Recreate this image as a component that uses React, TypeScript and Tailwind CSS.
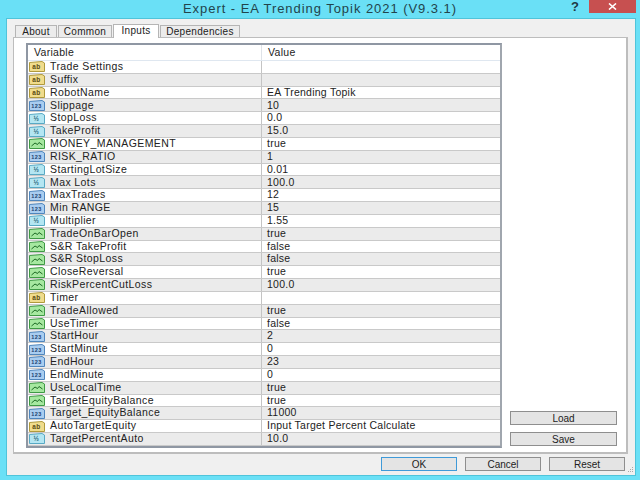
type Kind = "ab" | "123" | "v2" | "bool";

const rows: [Kind, string, string][] = [
  ["ab", "Trade Settings", ""],
  ["ab", "Suffix", ""],
  ["ab", "RobotName", "EA Trending Topik"],
  ["123", "Slippage", "10"],
  ["v2", "StopLoss", "0.0"],
  ["v2", "TakeProfit", "15.0"],
  ["bool", "MONEY_MANAGEMENT", "true"],
  ["123", "RISK_RATIO", "1"],
  ["v2", "StartingLotSize", "0.01"],
  ["v2", "Max Lots", "100.0"],
  ["123", "MaxTrades", "12"],
  ["123", "Min RANGE", "15"],
  ["v2", "Multiplier", "1.55"],
  ["bool", "TradeOnBarOpen", "true"],
  ["bool", "S&R TakeProfit", "false"],
  ["bool", "S&R StopLoss", "false"],
  ["bool", "CloseReversal", "true"],
  ["bool", "RiskPercentCutLoss", "100.0"],
  ["ab", "Timer", ""],
  ["bool", "TradeAllowed", "true"],
  ["bool", "UseTimer", "false"],
  ["123", "StartHour", "2"],
  ["123", "StartMinute", "0"],
  ["123", "EndHour", "23"],
  ["123", "EndMinute", "0"],
  ["bool", "UseLocalTime", "true"],
  ["bool", "TargetEquityBalance", "true"],
  ["123", "Target_EquityBalance", "11000"],
  ["ab", "AutoTargetEquity", "Input Target Percent Calculate"],
  ["v2", "TargetPercentAuto", "10.0"],
];

const iconColors = {
  ab: { fill: "#f0dc8c", stroke: "#b09a3c", text: "#5a4a10", label: "ab" },
  "123": { fill: "#a9cdf0", stroke: "#4f86bd", text: "#1c3f70", label: "123" },
  v2: { fill: "#b4e6f2", stroke: "#58a9c4", text: "#1d5f78", label: "½" },
  bool: { fill: "#a6e8a0", stroke: "#3f9a45", text: "#1e6a25", label: "" },
};

function RowIcon({ kind }: { kind: Kind }) {
  const c = iconColors[kind];
  return (
    <svg width="16" height="11" viewBox="0 0 16 11" className="shrink-0">
      <path d="M0.5 1.5 L13 0.5 L15.5 2 L15.5 10.5 L0.5 10.5 Z" fill={c.fill} stroke={c.stroke} />
      {kind === "bool" ? (
        <path d="M2.5 8 L6 5 L8.5 6.5 L10 4.5 L13.5 7" fill="none" stroke={c.text} strokeWidth="1" />
      ) : (
        <text
          x="7.5"
          y="8"
          textAnchor="middle"
          fontSize={kind === "123" ? 5.5 : 6.5}
          fontWeight="700"
          fontFamily="Liberation Sans, sans-serif"
          fill={c.text}
        >
          {c.label}
        </text>
      )}
    </svg>
  );
}

function Btn({ label, className }: { label: string; className: string }) {
  return (
    <div className={`flex items-center justify-center bg-[#e4e4e4] border text-[10px] text-[#222] ${className}`}>
      {label}
    </div>
  );
}

const tabs = [
  { label: "About", w: "w-[42px]" },
  { label: "Common", w: "w-[54px]" },
  { label: "Inputs", w: "w-[46px]" },
  { label: "Dependencies", w: "w-[80px]" },
];

export default function App() {
  return (
    <div
      className="w-[640px] h-[480px] overflow-hidden bg-[#6ae0f6] flex flex-col text-[#222]"
      style={{ fontFamily: '"Liberation Sans", sans-serif' }}
    >
      <div className="h-[18px] shrink-0 flex relative">
        <div className="flex-1 text-center text-[13px] leading-[18px] text-[#23444c] tracking-[0.95px]">
          Expert - EA Trending Topik 2021 (V9.3.1)
        </div>
        <div className="absolute left-[571px] top-[0px] text-[13px] leading-[14px] font-bold text-[#1f3a44]">?</div>
        <div className="absolute left-[589px] top-0 w-[47px] h-[13px] bg-[#c75050] flex items-center justify-center">
          <svg width="9" height="7" viewBox="0 0 9 7">
            <path d="M1 0.5 L8 6.5 M8 0.5 L1 6.5" stroke="#fff" strokeWidth="1.6" />
          </svg>
        </div>
      </div>

      <div className="ml-[6px] w-[630px] h-[458px] bg-[#f0f0f0] border border-[#4fc4da] pl-[6px] pr-[6px] pt-[5px] relative">
        <div className="flex h-[13px] ml-[2px] items-end gap-[1px]">
          {tabs.map((t) => (
            <div
              key={t.label}
              className={
                t.label === "Inputs"
                  ? `${t.w} h-[14px] text-center bg-white border border-b-0 border-[#b5b5b5] text-[10px] tracking-[0.3px] leading-[12px] -mb-px z-10 relative`
                  : `${t.w} h-[12px] text-center bg-[#ececec] border border-b-0 border-[#b5b5b5] text-[10px] tracking-[0.3px] leading-[12px]`
              }
            >
              {t.label}
            </div>
          ))}
        </div>
        <div className="w-[615px] h-[417px] bg-white border-2 border-t border-l border-[#bdbdbd] pl-[12px] pt-[5px] flex">
          <div className="w-[476px] h-[405px] border-2 border-[#8f97a3] border-r-[#a0a6ae] overflow-hidden shrink-0">
            <div className="flex h-[16px] text-[10.5px] tracking-[0.3px] leading-[15px] bg-white border-b border-[#dfe7f0]">
              <div className="w-[234px] pl-[6px] border-r border-[#dfe3e8]">Variable</div>
              <div className="pl-[6px]">Value</div>
            </div>
            {rows.map(([kind, name, value], i) => (
              <div
                key={name}
                className={`flex h-[12.83px] items-center text-[10.5px] border-b border-[#c9c9c9] ${
                  i % 2 === 1 ? "bg-[#ebebeb]" : "bg-white"
                }`}
              >
                <div className="w-[234px] h-full flex items-center pl-[1px] gap-[5px] border-r border-[#c4c4c4] whitespace-nowrap overflow-hidden tracking-[0.4px]">
                  <RowIcon kind={kind} />
                  <span>{name}</span>
                </div>
                <div className="pl-[5px] whitespace-nowrap tracking-[0.25px]">{value}</div>
              </div>
            ))}
          </div>
          <div className="ml-[8px] w-[107px] h-full flex flex-col justify-end pb-[6px] gap-[7px]">
            <Btn label="Load" className="h-[14px] border-[#8e8e8e]" />
            <Btn label="Save" className="h-[14px] border-[#8e8e8e]" />
          </div>
        </div>
        <div className="flex justify-end gap-[8px] pr-[4px] mt-[3px]">
          <Btn label="OK" className="w-[76px] h-[14px] border-[#3f9ad8]" />
          <Btn label="Cancel" className="w-[76px] h-[14px] border-[#8e8e8e]" />
          <Btn label="Reset" className="w-[76px] h-[14px] border-[#8e8e8e]" />
        </div>
        <svg width="8" height="8" viewBox="0 0 8 8" className="absolute right-[1px] bottom-[1px]">
          <path d="M6 1h1v1H6zM4 3h1v1H4zM6 3h1v1H6zM2 5h1v1H2zM4 5h1v1H4zM6 5h1v1H6z" fill="#a8a8a8" />
        </svg>
      </div>
    </div>
  );
}
